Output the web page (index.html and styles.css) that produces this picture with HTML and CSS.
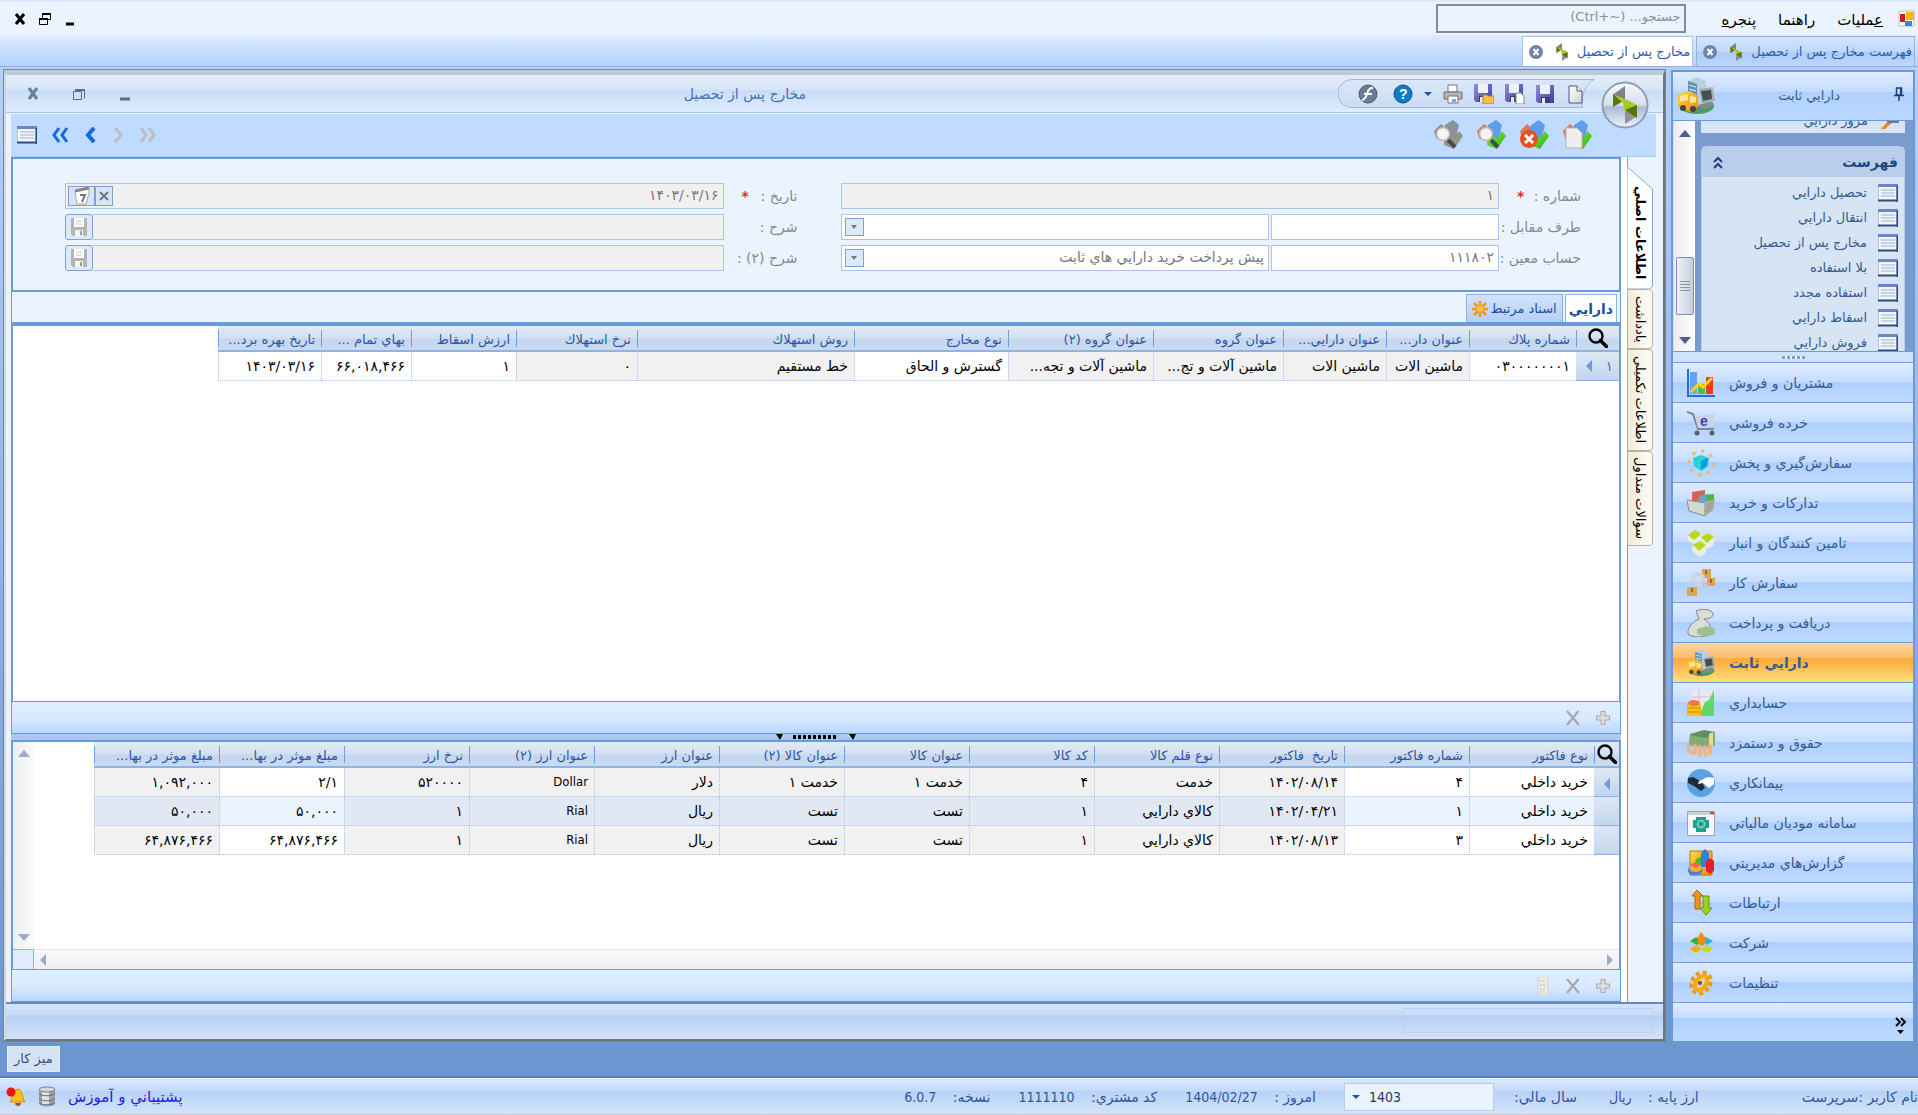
FILE: index.html
```
<!DOCTYPE html>
<html lang="fa" dir="rtl">

<head>
    <meta charset="utf-8">
    <title>مخارج پس از تحصيل</title>
    <link rel="stylesheet" href="styles.css">
</head>

<body>
    <!-- shared icons -->
    <svg class="defs" width="0" height="0">
        <linearGradient id="gDisk" x1="0" y1="0" x2="1" y2="1"><stop offset="0" stop-color="#8f90e0"/><stop offset="1" stop-color="#3a3a9e"/></linearGradient>
        <linearGradient id="gGreen" x1="0" y1="0" x2="1" y2="1"><stop offset="0" stop-color="#8be04a"/><stop offset="1" stop-color="#27b50d"/></linearGradient>
        <linearGradient id="gSilver" x1="0" y1="0" x2="0" y2="1"><stop offset="0" stop-color="#f8fafc"/><stop offset=".5" stop-color="#d5deea"/><stop offset=".55" stop-color="#a9bbd6"/><stop offset="1" stop-color="#eef4fb"/></linearGradient>
        <linearGradient id="gOrange" x1="0" y1="0" x2="1" y2="1"><stop offset="0" stop-color="#ffd83a"/><stop offset="1" stop-color="#ef8a12"/></linearGradient>
        <linearGradient id="gNew" x1="0" y1="0" x2="1" y2="1"><stop offset="0" stop-color="#ffffff"/><stop offset="1" stop-color="#d0d4dc"/></linearGradient>
        <linearGradient id="gPill" x1="0" y1="0" x2="0" y2="1"><stop offset="0" stop-color="#dce8f8"/><stop offset="1" stop-color="#c9dbf3"/></linearGradient>
        <symbol id="logo" viewBox="0 0 24 38">
            <path d="M12 0v14L0 8.500z" fill="#7d8288"/><path d="M12 38V24l12 6z" fill="#8e9298"/>
            <path d="M0 8v13l12-7z" fill="#56760f"/><path d="M0 8l12 5 12 6-12 7-2-9z" fill="#a9c92b"/><path d="M12 24l12-5v13z" fill="#55750f"/>
        </symbol>
        <symbol id="tabclose" viewBox="0 0 14 14">
            <circle cx="7" cy="7" r="7" fill="#6f84a6"/><path d="M4.500 4l5 6M9.500 4l-5 6" stroke="#fff" stroke-width="2"/>
        </symbol>
        <symbol id="list" viewBox="0 0 20 18">
            <path d="M0 .5h19v16H0z" fill="#f2f6fb" stroke="#7e93bd"/><path d="M0 0h20v3H0z" fill="#6a84c6"/><path d="M3 6h14M3 9h14M3 12h14" stroke="#9fb0cb"/><path d="M0 16.500h20M19.500 2v16" stroke="#2f4d7c" stroke-width="2"/>
        </symbol>
        <symbol id="mag" viewBox="0 0 20 20">
            <circle cx="8" cy="8" r="6.500" fill="none" stroke="#000" stroke-width="2.400"/><path d="M12.500 12.500l6 6" stroke="#000" stroke-width="3.600" stroke-linecap="round"/>
        </symbol>
        <symbol id="disk" viewBox="0 0 18 18">
            <path d="M0 0h18v18H2l-2-2z" fill="url(#gDisk)"/><path d="M4 0h10v9H4z" fill="#eef1fb"/><path d="M5 12h9v6H5z" fill="#3d3d70"/><path d="M6 13h3v5H6z" fill="#e8ebf6"/>
        </symbol>
        <symbol id="graydisk" viewBox="0 0 18 18">
            <path d="M1 0h16v18H3l-2-2z" fill="#b4b4b4"/><path d="M4 0h10v9H4z" fill="#fafafa"/><path d="M6 3h6M6 6h6" stroke="#ccc"/><path d="M5 12h8v6H5z" fill="#f4f4f4"/><path d="M10 13h2v4h-2z" fill="#999"/>
        </symbol>
        <symbol id="cubes" viewBox="0 0 30 30">
            <path d="M1 11l7-7 6 5-4 12-7-3z" fill="#d9776a"/><path d="M12 5l8-5 6 5-2 8 4 3-8 5-9-6z" fill="#5f9cea"/><path d="M12 14l9 4 5-7 4 5-9 13-10-4z" fill="url(#gGreen)"/>
        </symbol>
        <symbol id="graycubes" viewBox="0 0 30 30">
            <path d="M1 11l7-7 6 5-4 12-7-3z" fill="#8d8d8d"/><path d="M12 5l8-5 6 5-2 8 4 3-8 5-9-6z" fill="#8b9099"/><path d="M12 14l9 4 5-7 4 5-9 13-10-4z" fill="#8f9689"/>
        </symbol>
        <symbol id="lens" viewBox="0 0 30 30">
            <path d="M15 20l7 7" stroke="#4a4a4a" stroke-width="4"/><circle cx="10" cy="14" r="6.500" fill="#f4f4f4" stroke="#c2b5b0" stroke-width="1.500"/>
        </symbol>
        <symbol id="plus" viewBox="0 0 16 16">
            <path d="M6 1.500h4v4.500h4.500v4H10v4.500H6V10H1.500V6H6z" fill="#dcdcdc" stroke="#a9a9a9"/>
        </symbol>
        <symbol id="cross" viewBox="0 0 16 16">
            <path d="M2 1l12 14M13.500 1L2 15" stroke="#a8a8a8" stroke-width="2.200"/>
        </symbol>
        <symbol id="assets" viewBox="0 0 38 38">
            <ellipse cx="20" cy="29" rx="17" ry="8" fill="#4d9a63"/><path d="M11 4l9-4 9 4v22l-9 4-9-4z" fill="#b8d0e2"/><path d="M11 4l9 3v23l-9-4z" fill="#5f94b8"/><path d="M12 8l7 2M12 12l7 2M12 16l7 2" stroke="#dff2ff"/>
            <path d="M22 12l14-2 2 14-13 3z" fill="#a7adb1"/><path d="M24 14l10-1 1 9-9 2z" fill="#454f55"/><path d="M21 28l13-3 3 3-12 5z" fill="#808a8d"/>
            <path d="M1 17l12-3 8 5v11l-8 5-12-5z" fill="url(#gOrange)"/><path d="M3 19l8-2v6l-8 2zM13 19l6 1v5l-6 1z" fill="#fbe5a0"/><circle cx="6" cy="31" r="3" fill="#444"/><circle cx="16" cy="32" r="3" fill="#444"/>
        </symbol>
    </svg>

    <header class="menubar">
        <svg class="app-icon" viewBox="0 0 17 17"><path d="M1 1h15v15H1z" fill="#fff" stroke="#b8c0cc"/><path d="M2 4h5v8H2z" fill="#c81e1e"/><path d="M8 2h8v8H8z" fill="#f6b90e"/><path d="M7 11h7v5H7z" fill="#3e7fe0"/></svg>
        <nav class="menus">
            <a href="#"><u>ع</u>مليات</a>
            <a href="#"><u>ر</u>اهنما</a>
            <a href="#">پنجر<u>ه</u></a>
        </nav>
        <input class="search" type="text" placeholder="جستجو... (~+Ctrl)" aria-label="جستجو">
        <div class="app-controls">
            <button aria-label="کوچک"><svg width="12" height="14"><path d="M2 12h8" stroke="#000" stroke-width="3"/></svg></button>
            <button aria-label="بازگرداندن"><svg width="14" height="14"><path d="M4.500 1.500h8v6h-8zM1.500 6.500h8v6h-8z" fill="#eaf3ff" stroke="#000"/><path d="M4 2h9M1 7h9" stroke="#000" stroke-width="2"/></svg></button>
            <button aria-label="بستن"><svg width="12" height="14"><path d="M2 2l8 10M10 2L2 12" stroke="#000" stroke-width="3"/></svg></button>
        </div>
    </header>

    <nav class="doc-tabs">
        <a href="#" class="doc-tab"><span>فهرست مخارج پس از تحصيل</span>
            <svg class="tab-logo"><use href="#logo"/></svg><svg class="tab-close"><use href="#tabclose"/></svg></a>
        <a href="#" class="doc-tab current"><span>مخارج پس از تحصيل</span>
            <svg class="tab-logo"><use href="#logo"/></svg><svg class="tab-close"><use href="#tabclose"/></svg></a>
    </nav>

    <div class="workspace">
        <aside class="sidebar">
            <div class="side-head">
                <svg class="pin" viewBox="0 0 10 14"><path d="M2.500 1h5v7h-5zM0 8.500h10M5 8v6" fill="none" stroke="#1f3f7a" stroke-width="1.500"/><path d="M7 1v7" stroke="#1f3f7a" stroke-width="2"/></svg>
                <h2>دارايي ثابت</h2>
                <svg class="side-icon"><use href="#assets"/></svg>
            </div>
            <div class="side-scroll">
                <div class="side-groups">
                    <div class="group-cut">
                        <a href="#"><svg viewBox="0 0 20 18"><path d="M2 17L12 6l3 3-9 8z" fill="#e9862c"/><path d="M8 9h12" stroke="#7a7a7a" stroke-width="4"/></svg>مرور دارايي</a>
                    </div>
                    <section class="group">
                        <h3>فهرست<svg viewBox="0 0 10 13"><path d="M1 6l4-4 4 4M1 12l4-4 4 4" fill="none" stroke="#1e3f7d" stroke-width="2"/></svg></h3>
                        <ul>
                            <li><a href="#"><svg><use href="#list"/></svg>تحصيل دارايي</a></li>
                            <li><a href="#"><svg><use href="#list"/></svg>انتقال دارايي</a></li>
                            <li><a href="#"><svg><use href="#list"/></svg>مخارج پس از تحصيل</a></li>
                            <li><a href="#"><svg><use href="#list"/></svg>بلا استفاده</a></li>
                            <li><a href="#"><svg><use href="#list"/></svg>استفاده مجدد</a></li>
                            <li><a href="#"><svg><use href="#list"/></svg>اسقاط دارايي</a></li>
                            <li><a href="#"><svg><use href="#list"/></svg>فروش دارايي</a></li>
                        </ul>
                    </section>
                </div>
                <div class="scrollbar">
                    <i class="arrow up dark"></i>
                    <span class="thumb"></span>
                    <i class="arrow down dark"></i>
                </div>
            </div>
            <div class="side-grip"><i></i></div>
            <nav class="modules">
                <a href="#"><svg viewBox="0 0 28 28"><path d="M3 3h7v22H3z" fill="#5fa6f5"/><path d="M11 15h7v10h-7z" fill="#4cc43a"/><path d="M19 8h7v17h-7z" fill="#ef3b16"/><path d="M4 23l8-8 4 3 9-9" fill="none" stroke="#ffd21c" stroke-width="3"/><path d="M1 0v27h27" fill="none" stroke="#2a6cd0" stroke-width="2"/></svg><span>مشتريان و فروش</span></a>
                <a href="#"><svg viewBox="0 0 28 28"><path d="M0 3l6 2 5 15h16" fill="none" stroke="#7d8794" stroke-width="2"/><path d="M8 7l19-2v12l-16 2z" fill="#c9d3e6"/><text x="13" y="17" class="e-mark">e</text><circle cx="10" cy="24" r="2.500" fill="#5a5f68"/><circle cx="25" cy="24" r="2.500" fill="#5a5f68"/></svg><span>خرده فروشي</span></a>
                <a href="#"><svg viewBox="0 0 28 28"><circle cx="14" cy="14" r="12" fill="none" stroke="#f0b860" stroke-width="3" stroke-dasharray="3 6.400"/><path d="M6 9l8-3 8 3-1 8-7 5-7-5z" fill="#22d3dc"/><path d="M14 12l7-3-1 8-6 4z" fill="#1599d6"/></svg><span>سفارش‌گيري و پخش</span></a>
                <a href="#"><svg viewBox="0 0 28 28"><path d="M5 3l13-2v11H5z" fill="#d8624e"/><path d="M13 6l14-1v7H13z" fill="#4cb648"/><path d="M11 9l7-5 2 9h-9z" fill="#6d9fd0"/><path d="M0 11l18 3v13L2 22z" fill="#d5d7cf" stroke="#8a8d86"/><path d="M18 14l10-5-2 12-8 6z" fill="#a4a79f"/></svg><span>تداركات و خريد</span></a>
                <a href="#"><svg viewBox="0 0 28 28"><path d="M0 6l8-5 8 5-1 7-7 3-7-4zM13 8l8-5 7 5-1 8-7 4-6-4zM5 17l7-5 8 5-1 7-7 4-6-5z" fill="#e6ece6"/><path d="M1 6l7-5 6 4-7 6zM14 8l7-4 6 4-7 6zM6 16l7-4 6 4-7 6z" fill="#b9d818"/></svg><span>تامين كنندگان و انبار</span></a>
                <a href="#"><svg viewBox="0 0 28 28"><path d="M15 0h9v9h-9zM20 9h8v8h-8zM0 18h10v9H0z" fill="#dda551"/><path d="M18 1h2v4h-2zM23 10h2v4h-2zM4 19h2v4H4z" fill="#9a6b28"/><circle cx="11" cy="10" r="5" fill="none" stroke="#d0d4d8" stroke-width="4"/><circle cx="18" cy="16" r="2" fill="none" stroke="#c1c5ca" stroke-width="2"/></svg><span>سفارش كار</span></a>
                <a href="#"><svg viewBox="0 0 28 28"><path d="M9 2c6-3 16-2 17 3 1 4-7 5-9 5 5 3 8 9 7 14-5 5-19 5-23 1C0 19 6 12 12 10z" fill="#dcdcd8" stroke="#858581"/><path d="M10 20l10-3 8 3v5l-9 3-9-3z" fill="#9fc08f"/></svg><span>دريافت و پرداخت</span></a>
                <a href="#" class="current"><svg><use href="#assets"/></svg><span>دارايي ثابت</span></a>
                <a href="#"><svg viewBox="0 0 28 28"><path d="M5 1h22v26H5z" fill="#ece6f0"/><path d="M12 1v22M5 8h21" stroke="#cdbfd6"/><path d="M12 27l6-14 4-2 5-10v26z" fill="#62d667"/><path d="M0 15h14v12H0z" fill="#f6c018"/><path d="M0 19h14M0 23h14" stroke="#cf8d0b"/><ellipse cx="7" cy="14" rx="6" ry="3" fill="#ef7a35"/></svg><span>حسابداري</span></a>
                <a href="#"><svg viewBox="0 0 28 28"><path d="M3 5l14-4 11 2v13l-9 3L2 16z" fill="#5f9160"/><path d="M3 6l16 3 9-6v13l-9 3-17-3z" fill="#83ab72"/><path d="M22 5l4-2v14l-4 1z" fill="#e5dc8c"/><path d="M1 15c0 6 2 8 4 9M8 17v7M13 18v8M18 18v8M23 17v7" stroke="#ebb487" stroke-width="4" stroke-linecap="round" fill="none"/></svg><span>حقوق و دستمزد</span></a>
                <a href="#"><svg viewBox="0 0 28 28"><circle cx="14" cy="14" r="14" fill="#5ba3e0"/><path d="M1 9l5-1 9 5 3 6-4 3-7-5-6-3z" fill="#222b38"/><path d="M27 9l-6-1-9 4-1 3 5-1 6 5 5-4z" fill="#fff"/></svg><span>پيمانكاري</span></a>
                <a href="#"><svg viewBox="0 0 28 28"><path d="M.5 2.500h27v24H.5z" fill="#f4f8f8" stroke="#98a5ad"/><path d="M1 3h26v3H1z" fill="#c8d0d6"/><path d="M23 3h4v2h-4z" fill="#d23c3c"/><path d="M9 8h10v3h3v8h-3v4H9v-4H6v-8h3z" fill="#1fa08a"/><circle cx="14" cy="15" r="3.500" fill="none" stroke="#8cd6ca" stroke-width="1.500"/></svg><span>سامانه موديان مالياتي</span></a>
                <a href="#"><svg viewBox="0 0 28 28"><path d="M3 2h22v24H3z" fill="url(#gOrange)" stroke="#b97907"/><path d="M8 14a6 6 0 0 1 6-6v8z" fill="#4bb62c"/><path d="M14 4l4-4 4 4v14h-8z" fill="#2f7fe8"/><path d="M19 12l4-3 4 3v10l-4 3-4-3z" fill="#e22222"/><path d="M1 17a7 5 0 0 0 15 1l-1 5c-3 5-13 4-14-1z" fill="#3f83ea"/><path d="M3 16l5 3 6-3c-3-3-9-3-11 0z" fill="#f0655c"/></svg><span>گزارش‌هاي مديريتي</span></a>
                <a href="#"><svg viewBox="0 0 28 28"><path d="M10 1l6 6h-3v13H8V7H5z" fill="#f09419" stroke="#b36205"/><path d="M16 7h6v12h3l-6 7-6-7h3z" fill="#9dd21d" stroke="#5e9b0d"/></svg><span>ارتباطات</span></a>
                <a href="#"><svg viewBox="0 0 28 28"><path d="M9 8l6 4-5 4-7-4z" fill="#2fb62c"/><path d="M19 8l7 4-6 4-5-4z" fill="#23b3e6"/><path d="M9 16l6 4-6 4-6-4z" fill="#f6ad12"/><path d="M20 16l6 4-6 4-6-4z" fill="#c5da1b"/><path d="M11 8l3-5 4 5v7l-3 2-4-2z" fill="#f28a15"/></svg><span>شركت</span></a>
                <a href="#"><svg viewBox="0 0 28 28"><ellipse cx="14" cy="14" rx="9" ry="11" transform="rotate(35 14 14)" fill="none" stroke="#ee9914" stroke-width="4" stroke-dasharray="4 3"/><ellipse cx="14" cy="14" rx="5" ry="8" transform="rotate(35 14 14)" fill="#e9d3a0" stroke="#f5a716" stroke-width="4"/><circle cx="13" cy="14" r="2" fill="#555"/></svg><span>تنظيمات</span></a>
            </nav>
            <button class="more" aria-label="بيشتر"><svg width="12" height="18"><path d="M1 1l4 4-4 4M6 1l4 4-4 4" fill="none" stroke="#000" stroke-width="2"/><path d="M2 13h7l-3.500 4z"/></svg></button>
        </aside>

        <main class="window">
            <div class="win-title">
                <svg class="orb" viewBox="0 0 48 48"><circle cx="24" cy="24" r="22.500" fill="url(#gSilver)" stroke="#8f9db2" stroke-width="2"/><use href="#logo" x="12" y="5" width="24" height="38"/></svg>
                <div class="quick">
                    <svg class="pill" viewBox="0 0 268 29" preserveAspectRatio="none"><path d="M267.500.5H14a14 14 0 0 0 0 28H255c-2-12 3-24 12.500-28z" fill="url(#gPill)" stroke="#9db8e0"/></svg>
                    <button aria-label="جديد"><svg width="20" height="20"><path d="M4 2h8l5 5v12H4z" fill="url(#gNew)" stroke="#4a5a78"/><path d="M12 2v5h5" fill="#fff" stroke="#4a5a78"/></svg></button>
                    <button aria-label="ثبت"><svg width="18" height="18"><use href="#disk"/></svg></button>
                    <button aria-label="ثبت و جديد"><svg width="20" height="20"><use href="#disk" width="18" height="18"/><path d="M11 9h5l3 3v8h-8z" fill="#fff" stroke="#7a86a0"/></svg></button>
                    <button aria-label="ثبت و بستن"><svg width="20" height="20"><use href="#disk" width="18" height="18"/><path d="M9 11h4l1 1h6v8H9z" fill="#f4c04a" stroke="#b98420"/></svg></button>
                    <button aria-label="چاپ"><svg width="20" height="20"><path d="M5 1h9v7H5z" fill="#fff" stroke="#777"/><path d="M1 8h18v7H1z" fill="#b6b6ba" stroke="#6e6e74"/><path d="M5 12h10v7H5z" fill="#f5faff" stroke="#777"/><path d="M9 15h4v3H9z" fill="#5fb0e8"/></svg></button>
                    <i class="arrow down blue"></i>
                    <button aria-label="راهنما"><svg width="20" height="20"><circle cx="10" cy="10" r="9" fill="#0f7cc9" stroke="#0a4f94"/><text x="6" y="15" class="q-mark">?</text></svg></button>
                    <button class="formula" aria-label="فرمول"><svg width="20" height="20"><circle cx="10" cy="10" r="9" fill="#6c7c96" stroke="#4c5766"/><path d="M15 4c-4-1-5 3-6 6s-2 6-5 6M6 10h8" fill="none" stroke="#fff" stroke-width="2"/></svg></button>
                </div>
                <h1>مخارج پس از تحصيل</h1>
                <div class="win-controls">
                    <button aria-label="کوچک"><svg width="12" height="14"><path d="M1 12h10" stroke="#5b6d8c" stroke-width="3"/></svg></button>
                    <button aria-label="بازگرداندن"><svg width="12" height="14"><path d="M3.500 2.500h8v9M.5 4.500h8v8h-8z" fill="none" stroke="#5b6d8c"/><path d="M2 3h10" stroke="#5b6d8c" stroke-width="2"/></svg></button>
                    <button aria-label="بستن"><svg width="12" height="14"><path d="M2 1l8 11M10 1L2 12" stroke="#6b7fa5" stroke-width="3"/></svg></button>
                </div>
            </div>

            <div class="toolbar">
                <div class="actions">
                    <button aria-label="جديد"><svg width="30" height="30"><use href="#cubes"/><path d="M4 8h11l5 5v15H4z" fill="#f0eeec" stroke="#b9b4ae"/></svg></button>
                    <button aria-label="حذف"><svg width="30" height="30"><use href="#cubes"/><circle cx="10" cy="19" r="9" fill="#e8501e"/><path d="M6 15l8 8M14 15l-8 8" stroke="#fff" stroke-width="3"/></svg></button>
                    <button aria-label="مشاهده"><svg width="30" height="30"><use href="#cubes"/><use href="#lens"/></svg></button>
                    <button aria-label="جستجو"><svg width="30" height="30"><use href="#graycubes"/><use href="#lens"/></svg></button>
                </div>
                <div class="pager">
                    <button aria-label="اولين"><svg width="18" height="16"><path d="M2 1l5 7-5 7M10 1l5 7-5 7" fill="none" stroke="#bdbdbd" stroke-width="3"/></svg></button>
                    <button aria-label="قبلي"><svg width="14" height="16"><path d="M4 1l6 7-6 7" fill="none" stroke="#bdbdbd" stroke-width="3"/></svg></button>
                    <button aria-label="بعدي"><svg width="14" height="16"><path d="M11 1L5 8l6 7" fill="none" stroke="#1866e0" stroke-width="4"/></svg></button>
                    <button aria-label="آخرين"><svg width="18" height="16"><path d="M8 1L3 8l5 7M16 1l-5 7 5 7" fill="none" stroke="#1866e0" stroke-width="3"/></svg></button>
                    <button aria-label="فهرست"><svg width="20" height="18"><use href="#list"/></svg></button>
                </div>
            </div>

            <div class="win-body">
                <nav class="side-tabs">
                    <a href="#" class="first"><svg class="tab-edge" viewBox="0 0 26 132" preserveAspectRatio="none"><path d="M.5 0v10l25 22v97l-3 3H.5" fill="#fff" stroke="#8aa9c8"/></svg><b>اطلاعات اصلي</b></a>
                    <a href="#" class="note">يادداشت</a>
                    <a href="#" class="extra">اطلاعات تكميلي</a>
                    <a href="#" class="faq">سؤالات متداول</a>
                </nav>

                <div class="content">
                    <form class="form">
                        <label for="num">شماره : <em>*</em></label>
                        <input id="num" type="text" value="۱" disabled>
                        <label for="date">تاريخ : <em>*</em></label>
                        <div class="box">
                            <input id="date" type="text" value="۱۴۰۳/۰۳/۱۶" disabled>
                            <button type="button" class="tiny narrow" aria-label="پاك كردن"><svg width="10" height="12"><path d="M1 2l8 8M9 2L1 10" stroke="#777" stroke-width="2"/></svg></button>
                            <button type="button" class="tiny" aria-label="تقويم"><svg width="18" height="18"><path d="M2 4l14-3v5l-3 11H4z" fill="#fff" stroke="#aaa"/><path d="M2 4l14-3" stroke="#888" stroke-width="3"/><path d="M7 8h5l-3 7" fill="none" stroke="#777" stroke-width="2"/></svg></button>
                        </div>

                        <label for="party">طرف مقابل :</label>
                        <div class="pair">
                            <input id="party" type="text">
                            <div class="combo"><input type="text" aria-label="عنوان طرف مقابل"><button type="button" class="drop" aria-label="انتخاب"><i class="arrow down"></i></button></div>
                        </div>
                        <label for="desc">شرح :</label>
                        <div class="with-save"><input id="desc" type="text" disabled><button type="button" class="save" aria-label="ثبت شرح"><svg width="18" height="18"><use href="#graydisk"/></svg></button></div>

                        <label for="acc">حساب معين :</label>
                        <div class="pair">
                            <input id="acc" type="text" value="۱۱۱۸۰۲">
                            <div class="combo"><input type="text" value="پيش پرداخت خريد دارايي هاي ثابت" aria-label="عنوان حساب معين"><button type="button" class="drop" aria-label="انتخاب"><i class="arrow down"></i></button></div>
                        </div>
                        <label for="desc2">شرح (۲) :</label>
                        <div class="with-save"><input id="desc2" type="text" disabled><button type="button" class="save" aria-label="ثبت شرح ۲"><svg width="18" height="18"><use href="#graydisk"/></svg></button></div>
                    </form>

                    <nav class="sub-tabs">
                        <a href="#" class="current">دارايي</a>
                        <a href="#">اسناد مرتبط<svg viewBox="0 0 16 16"><path d="M8 0v16M0 8h16M2 2l12 12M14 2L2 14" stroke="#f0971a" stroke-width="2.500"/><circle cx="8" cy="8" r="3" fill="#ffc63b"/></svg></a>
                    </nav>

                    <div class="grid assets">
                        <table>
                            <colgroup>
                                <col class="w43"><col class="w107"><col class="w83"><col class="w103"><col class="w130"><col class="w145"><col class="w154"><col class="w217"><col class="w121"><col class="w105"><col class="w90"><col class="w103">
                            </colgroup>
                            <thead>
                                <tr>
                                    <th class="pick"><svg><use href="#mag"/></svg></th>
                                    <th>شماره پلاك</th><th>عنوان دار...</th><th>عنوان دارايي...</th><th>عنوان گروه</th><th>عنوان گروه (۲)</th><th>نوع مخارج</th><th>روش استهلاك</th><th>نرخ استهلاك</th><th>ارزش اسقاط</th><th>بهاي تمام ...</th><th>تاريخ بهره برد...</th>
                                </tr>
                            </thead>
                            <tbody>
                                <tr>
                                    <td class="pick">۱<i class="arrow left"></i></td>
                                    <td>۰۳۰۰۰۰۰۰۰۱</td><td class="ro">ماشين الات</td><td class="ro">ماشين الات</td><td class="ro">ماشين آلات و تج...</td><td class="ro">ماشين آلات و تجه...</td><td>گسترش و الحاق</td><td class="ro">خط مستقيم</td><td class="ro">۰</td><td>۱</td><td>۶۶,۰۱۸,۴۶۶</td><td>۱۴۰۳/۰۳/۱۶</td>
                                </tr>
                            </tbody>
                        </table>
                    </div>
                    <div class="grid-bar">
                        <button aria-label="افزودن"><svg><use href="#plus"/></svg></button>
                        <button aria-label="حذف"><svg><use href="#cross"/></svg></button>
                    </div>
                    <div class="splitter"><svg width="80" height="6"><path d="M0 0h7L4 6zM73 0h7l-3 6z"/><path d="M17 3h44" stroke="#000" stroke-width="4" stroke-dasharray="3 2"/></svg></div>

                    <div class="grid invoices">
                        <div class="grid-view">
                            <table>
                                <colgroup>
                                    <col class="w25"><col span="12" class="w125">
                                </colgroup>
                                <thead>
                                    <tr>
                                        <th class="pick"><svg><use href="#mag"/></svg></th>
                                        <th>نوع فاكتور</th><th>شماره فاكتور</th><th>تاريخ &nbsp;فاكتور</th><th>نوع قلم كالا</th><th>كد كالا</th><th>عنوان كالا</th><th>عنوان كالا (۲)</th><th>عنوان ارز</th><th>عنوان ارز (۲)</th><th>نرخ ارز</th><th>مبلغ موثر در بها...</th><th>مبلغ موثر در بها...</th>
                                    </tr>
                                </thead>
                                <tbody>
                                    <tr>
                                        <td class="pick"><i class="arrow left"></i></td>
                                        <td>خريد داخلي</td><td>۴</td><td class="ro">۱۴۰۲/۰۸/۱۴</td><td class="ro">خدمت</td><td class="ro">۴</td><td class="ro">خدمت ۱</td><td class="ro">خدمت ۱</td><td class="ro">دلار</td><td class="ro latin">Dollar</td><td class="ro">۵۲۰۰۰۰</td><td>۲/۱</td><td class="ro">۱,۰۹۲,۰۰۰</td>
                                    </tr>
                                    <tr>
                                        <td class="pick"></td>
                                        <td>خريد داخلي</td><td>۱</td><td class="ro">۱۴۰۲/۰۴/۲۱</td><td class="ro">كالاي دارايي</td><td class="ro">۱</td><td class="ro">تست</td><td class="ro">تست</td><td class="ro">ريال</td><td class="ro latin">Rial</td><td class="ro">۱</td><td>۵۰,۰۰۰</td><td class="ro">۵۰,۰۰۰</td>
                                    </tr>
                                    <tr>
                                        <td class="pick"></td>
                                        <td>خريد داخلي</td><td>۳</td><td class="ro">۱۴۰۲/۰۸/۱۳</td><td class="ro">كالاي دارايي</td><td class="ro">۱</td><td class="ro">تست</td><td class="ro">تست</td><td class="ro">ريال</td><td class="ro latin">Rial</td><td class="ro">۱</td><td>۶۴,۸۷۶,۴۶۶</td><td class="ro">۶۴,۸۷۶,۴۶۶</td>
                                    </tr>
                                </tbody>
                            </table>
                        </div>
                        <div class="vbar"><i class="arrow up"></i><i class="arrow down"></i></div>
                        <div class="hbar"><i class="arrow right"></i><i class="arrow left"></i></div>
                        <div class="corner"></div>
                    </div>
                    <div class="grid-bar last">
                        <button aria-label="افزودن"><svg><use href="#plus"/></svg></button>
                        <button aria-label="حذف"><svg><use href="#cross"/></svg></button>
                        <button aria-label="محاسبه"><svg viewBox="0 0 16 18"><path d="M3 0h10v18H3z" fill="#f0ece4" stroke="#d2cec6"/><path d="M5 4h6M5 8h6M5 12h6M5 15h6" stroke="#bdb9b0" stroke-dasharray="2 1"/></svg></button>
                    </div>
                </div>
            </div>
            <div class="win-status"><span></span></div>
        </main>
    </div>

    <div class="taskbar"><button>ميز كار</button></div>

    <footer class="statusbar">
        <span class="user">نام كاربر :سرپرست</span>
        <span class="cur">ارز پايه : <b>ريال</b></span>
        <label for="year">سال مالي:</label>
        <div class="year">
            <select id="year"><option>1403</option></select>
            <i class="arrow down blue"></i>
        </div>
        <span class="today">امروز : <b>1404/02/27</b></span>
        <span class="cust">كد مشتري: <b>1111110</b></span>
        <span>نسخه: <b>6.0.7</b></span>
        <a href="#" class="support">پشتيباني و آموزش</a>
        <svg class="db" viewBox="0 0 18 20"><path d="M1 3v14c0 4 16 4 16 0V3z" fill="#9aa2a8"/><path d="M4 4v14c3 1 5 1 7 0V4z" fill="#dfe4e8"/><path d="M1 7c2 3 14 3 16 0M1 12c2 3 14 3 16 0M1 16c2 3 14 3 16 0" fill="none" stroke="#666e74"/><ellipse cx="9" cy="3" rx="8" ry="2.500" fill="#d2d8dc" stroke="#777f85"/></svg>
        <svg class="bell" viewBox="0 0 20 20"><path d="M4 15c3-4 2-12 8-13 5 1 4 9 7 13z" fill="#f7bf1b" stroke="#d18d0a"/><path d="M9 16h6c0 4-6 4-6 0z" fill="#8a6220"/><circle cx="5" cy="5" r="4.500" fill="#f01212"/></svg>
    </footer>
</body>

</html>
```

FILE: styles.css
```
* {
    margin: 0;
    padding: 0;
    box-sizing: border-box;
}

body {
    display: flex;
    flex-direction: column;
    height: 100vh;
    overflow: hidden;
    background: #6c96d0;
    color: #000;
    font: 13px/20px "DejaVu Sans", sans-serif;
    white-space: nowrap;
}

a {
    color: inherit;
    text-decoration: none;
}

button {
    display: block;
    border: 0;
    background: none;
    font: inherit;
}

svg {
    display: block;
    flex: none;
}

.defs {
    position: absolute;
}

input {
    min-width: 0;
    font: inherit;
}

/* small triangles */
.arrow {
    display: block;
    width: 0;
    height: 0;
    border: 5px solid transparent;
}

.arrow.up {
    border-width: 0 6px 7px;
    border-bottom-color: #9aa9cc;
}

.arrow.down {
    border-width: 7px 6px 0;
    border-top-color: #9aa9cc;
}

.arrow.left {
    border-width: 6px 6px 6px 0;
    border-right-color: #6c9ad6;
}

.arrow.right {
    border-width: 6px 0 6px 6px;
    border-left-color: #9aa9cc;
}

.arrow.up.dark {
    border-bottom-color: #4d5f8e;
}

.arrow.down.dark {
    border-top-color: #4d5f8e;
}

.arrow.down.blue {
    border-width: 4px 4px 0;
    border-top-color: #24529c;
}

/* menu bar */
.menubar {
    display: flex;
    align-items: center;
    height: 35px;
    padding: 0 3px 0 14px;
    border-top: 2px solid #dce8f6;
    background: #ebf3ff;
    font-size: 15px;
}

.app-icon {
    width: 17px;
    height: 17px;
}

.menus {
    display: flex;
    gap: 22px;
    padding: 2px 15px 0 36px;
}

.search {
    width: 250px;
    height: 29px;
    padding: 0 3px 4px;
    border: 2px solid #858b93;
    background: #ebf3ff;
    font-size: 13px;
}

.search::placeholder {
    color: #8c9096;
    opacity: 1;
}

.app-controls {
    display: flex;
    gap: 12px;
    margin-right: auto;
}

/* open documents */
.doc-tabs {
    display: flex;
    gap: 3px;
    height: 31px;
    padding: 1px 3px 0 0;
    background: linear-gradient(#deecff, #b4d2ff);
    color: #2f5dab;
}

.doc-tab {
    display: flex;
    align-items: center;
    gap: 9px;
    padding: 0 2px 0 6px;
    border: 1px solid #92b4e4;
    border-bottom: 0;
    background: linear-gradient(#d5e5fb, #c0d8fa 50%, #aeccf8 52%, #bcd6fc);
}

.doc-tab.current {
    border-color: #a9c4ea;
    background: #fff;
}

.tab-logo {
    width: 12px;
    height: 18px;
    margin-left: 4px;
}

.tab-close {
    width: 14px;
    height: 14px;
}

.workspace {
    display: flex;
    flex: 1;
    gap: 6px;
    min-height: 0;
    padding: 3px 3px 0 4px;
    border-top: 1px solid #93b0de;
    background: linear-gradient(#b4d0fa, #6c96d0);
}

/* right navigation pane */
.sidebar {
    display: flex;
    flex-direction: column;
    width: 244px;
    border: 2px solid #6b98d6;
    border-bottom: 0;
    background: #bbd7ff;
    color: #365a94;
}

.side-head {
    display: flex;
    align-items: center;
    justify-content: space-between;
    height: 49px;
    padding: 0 9px 0 4px;
    border-bottom: 1px solid #6b98d6;
    background: linear-gradient(#e0edff, #c4dcff 40%, #b0d1ff 42%, #b9d7ff);
}

.side-head h2 {
    flex: 1;
    padding-right: 54px;
    font-size: 13px;
    font-weight: normal;
}

.side-head .pin {
    width: 10px;
    height: 14px;
    margin-bottom: 4px;
}

.side-icon {
    width: 38px;
    height: 38px;
}

.side-scroll {
    display: flex;
    height: 230px;
    overflow: hidden;
    background: #7a9ccd;
}

.side-groups {
    flex: 1;
    padding: 0 8px 0 6px;
}

.group-cut {
    display: flex;
    align-items: flex-end;
    height: 12px;
    padding: 0 6px 2px;
    overflow: hidden;
    background: #d6e4f3;
}

.group-cut a,
.group li a {
    display: flex;
    align-items: center;
    gap: 11px;
}

.group-cut svg,
.group li svg {
    width: 20px;
    height: 18px;
}

.group {
    margin-top: 13px;
    border: 1px solid #b8cdea;
    border-radius: 6px 6px 0 0;
    background: #d6e4f3;
}

.group h3 {
    display: flex;
    align-items: center;
    justify-content: space-between;
    height: 30px;
    padding: 0 6px 0 11px;
    background: #b9ceea;
    color: #23487f;
    font-size: 14px;
}

.group h3 svg {
    width: 10px;
    height: 13px;
}

.group ul {
    padding: 3px 6px;
    list-style: none;
}

.group li a {
    height: 25px;
}

.scrollbar {
    display: flex;
    flex-direction: column;
    align-items: center;
    width: 22px;
    padding: 9px 0 7px;
    border-left: 1px solid #d5d9e0;
    background: linear-gradient(to right, #ececee, #fff);
}

.thumb {
    width: 18px;
    height: 58px;
    margin: auto 0 22px;
    border: 1px solid #7f8db5;
    border-radius: 2px;
    background: repeating-linear-gradient(#8b94ad 0 1px, transparent 1px 3px) center / 10px 10px no-repeat, linear-gradient(to right, #eef1f8, #c6cddf);
}

.side-grip {
    display: flex;
    align-items: center;
    justify-content: center;
    height: 11px;
    border-top: 1px solid #6b98d6;
    background: #cfe2ff;
}

.side-grip i {
    width: 23px;
    height: 3px;
    background: repeating-linear-gradient(to right, #7f9fd2 0 3px, #eff6ff 3px 5px);
}

.modules {
    font-size: 14px;
}

.modules a {
    display: flex;
    flex-direction: row-reverse;
    align-items: center;
    justify-content: flex-end;
    gap: 14px;
    height: 40px;
    padding-left: 14px;
    border-top: 1px solid #6f9cdb;
    background: linear-gradient(#dfecff, #c6ddff 48%, #aed0ff 50%, #bfdaff);
}

.modules a {
    justify-content: flex-start;
}

.modules svg {
    width: 28px;
    height: 28px;
}

.modules .current {
    background: linear-gradient(#fdd5a4, #fdbd6a 38%, #fda93c 40%, #ffdf78);
    font-weight: bold;
}

.e-mark {
    fill: #443ca0;
    font: bold 14px "Liberation Sans", sans-serif;
    direction: ltr;
}

.more {
    flex: 1;
    padding: 8px 6px 0 0;
    border-top: 1px solid #6f9cdb;
    background: linear-gradient(#dfecff, #c6ddff 38%, #aed0ff 40%, #bfdaff);
}

/* document window */
.window {
    display: flex;
    flex: 1;
    flex-direction: column;
    min-width: 0;
    border: 2px solid #d5d9dd;
    border-top: 5px solid #bccbd9;
    border-right: 2px solid #70747b;
    border-bottom: 2px solid #70747b;
    outline: 1px solid #71869f;
    background: #ebf3ff;
}

.win-title {
    display: flex;
    align-items: center;
    position: relative;
    height: 38px;
    padding: 0 68px 0 21px;
    border-bottom: 1px solid #a9c7ee;
    background: linear-gradient(#e4edf9, #d8e6f9 38%, #c9ddf6 42%, #deebff);
}

.orb {
    position: absolute;
    top: 6px;
    right: 14px;
    width: 48px;
    height: 48px;
}

.quick {
    display: flex;
    align-items: center;
    gap: 11px;
    position: relative;
    height: 29px;
    padding: 0 10px 0 20px;
}

.quick > * {
    position: relative;
}

.quick .pill {
    position: absolute;
    top: 0;
    left: 0;
    width: 100%;
    height: 29px;
}

.formula {
    margin-right: 4px;
}

.win-title h1 {
    flex: 1;
    padding-right: 532px;
    color: #4470b8;
    font-size: 14px;
    font-weight: normal;
    text-align: right;
}

.win-controls {
    display: flex;
    gap: 34px;
}

.toolbar {
    display: flex;
    align-items: center;
    justify-content: space-between;
    height: 43px;
    margin: 1px 7px 0 5px;
    padding: 0 64px 0 6px;
    border-bottom: 1px solid #a9c7ee;
    background: #bfdbff;
}

.actions {
    display: flex;
    gap: 13px;
}

.pager {
    display: flex;
    align-items: center;
    gap: 14px;
}

.win-body {
    display: flex;
    flex: 1;
    min-height: 0;
    padding: 0 1px 0 5px;
}

/* rotated tabs */
.side-tabs {
    width: 35px;
    padding-right: 9px;
    border-left: 1px solid #7c9dc4;
}

.side-tabs a {
    display: flex;
    align-items: center;
    justify-content: center;
    position: relative;
    width: 26px;
    border: 1px solid #b5b39d;
    border-radius: 0 4px 4px 0;
    background: linear-gradient(to right, #f1ecd9, #fdfcf6);
    writing-mode: vertical-rl;
}

.side-tabs .first {
    height: 132px;
    padding-top: 20px;
    border: 0;
    background: none;
}

.tab-edge {
    position: absolute;
    top: 0;
    left: 0;
    width: 26px;
    height: 132px;
}

.side-tabs b {
    position: relative;
}

.side-tabs .note {
    height: 60px;
}

.side-tabs .extra {
    height: 102px;
}

.side-tabs .faq {
    height: 95px;
}

.content {
    display: flex;
    flex: 1;
    flex-direction: column;
    min-width: 0;
    padding-right: 6px;
    background: #fff;
}

.form {
    display: grid;
    grid-template-columns: 82px 1fr 117px 1fr;
    grid-template-rows: repeat(3, 26px);
    row-gap: 5px;
    height: 134px;
    padding: 24px 38px 0 52px;
    border: 2px solid #6c9ad6;
    border-bottom-width: 1px;
    background: #ebf3ff;
    color: #85888e;
    font-size: 14px;
}

.form label {
    padding-top: 3px;
}

.form label em {
    float: left;
    margin-left: 18px;
    color: #f02020;
    font-style: normal;
    font-weight: bold;
}

.form > :nth-child(4n + 3) {
    padding-right: 43px;
}

.form input {
    width: 100%;
    height: 26px;
    padding: 0 4px 2px;
    border: 1px solid #abc5ea;
    background: #fff;
    color: #777;
}

.form input:disabled {
    background: #f0f0f0;
}

.box,
.with-save,
.combo {
    display: flex;
    min-width: 0;
}

.box {
    padding-left: 2px;
    border: 1px solid #abc5ea;
    background: #f0f0f0;
}

.form .box input {
    height: 24px;
    border: 0;
}

.tiny {
    display: flex;
    align-items: center;
    justify-content: center;
    flex: none;
    width: 27px;
    height: 20px;
    margin-top: 2px;
    border: 1px solid #7f9fce;
    background: #d5e5f8;
}

.tiny.narrow {
    width: 18px;
}

.pair {
    display: grid;
    grid-template-columns: 228px 1fr;
    gap: 2px;
}

.combo {
    align-items: center;
    border: 1px solid #abc5ea;
    background: #fff;
}

.form .combo input {
    height: 24px;
    border: 0;
}

.drop {
    display: flex;
    align-items: center;
    justify-content: center;
    flex: none;
    width: 19px;
    height: 18px;
    margin-left: 3px;
    border: 1px solid #7f9fce;
    background: #dce9f9;
}

.drop .arrow.down {
    border-width: 4px 3px 0;
    border-top-color: #777;
}

.form .with-save input {
    border-left: 0;
}

.save {
    display: flex;
    align-items: center;
    justify-content: center;
    flex: none;
    width: 28px;
    border: 1px solid #7fa0d2;
    border-radius: 3px;
    background: #dce9f9;
}

/* tabs above the grid */
.sub-tabs {
    display: flex;
    align-items: flex-end;
    gap: 2px;
    height: 33px;
    padding: 0 3px;
    border: 1px solid #6c9ad6;
    border-width: 1px 1px 2px;
    background: #ebf3ff;
    color: #1f4f9f;
}

.sub-tabs a {
    display: flex;
    align-items: center;
    gap: 2px;
    height: 28px;
    padding: 0 5px;
    border: 1px solid #8fb0e2;
    border-bottom: 0;
    background: linear-gradient(#d3e3fa, #b4cff5);
}

.sub-tabs svg {
    width: 16px;
    height: 16px;
}

.sub-tabs .current {
    padding: 0 3px;
    background: #fff;
    font-size: 14px;
    font-weight: bold;
}

/* grids */
.grid {
    overflow: hidden;
    border: 2px solid #6c9ad6;
    border-bottom-width: 1px;
    background: #fff;
}

.grid.assets {
    flex: 1;
}

.grid table {
    width: 0;
    table-layout: fixed;
    border-collapse: separate;
    border-spacing: 0;
}

.w25 { width: 25px; }
.w43 { width: 43px; }
.w83 { width: 83px; }
.w90 { width: 90px; }
.w103 { width: 103px; }
.w105 { width: 105px; }
.w107 { width: 107px; }
.w121 { width: 121px; }
.w125 { width: 125px; }
.w130 { width: 130px; }
.w145 { width: 145px; }
.w154 { width: 154px; }
.w217 { width: 217px; }

th {
    height: 26px;
    padding: 4px 6px 0 2px;
    overflow: hidden;
    border-bottom: 2px solid #8fb2e2;
    background: linear-gradient(#6f9cdb, #6f9cdb) left 4px / 1px 17px no-repeat, linear-gradient(#e2ebf6, #d3e0f2 50%, #c5d7ef 55%, #c9daf1);
    color: #2c56a2;
    font-size: 13px;
    font-weight: normal;
    line-height: 18px;
    text-align: right;
}

th.pick {
    padding: 0 2px;
}

th.pick svg {
    width: 20px;
    height: 20px;
    margin: 0 auto;
}

td {
    height: 29px;
    padding: 0 6px 0 0;
    overflow: hidden;
    border-bottom: 1px dotted #a9c3ea;
    border-left: 1px dotted #a9c3ea;
    background: #fff;
    font-size: 14px;
    text-align: right;
}

td.ro {
    background: #f1f1f1;
}

td.latin {
    font-family: "DejaVu Sans Condensed", sans-serif;
    font-size: 13px;
}

tbody tr:nth-child(even) td {
    background: #ebf3ff;
}

tbody tr:nth-child(even) td.ro {
    background: #e1e8f3;
}

tbody td.pick,
tbody tr:nth-child(even) td.pick {
    border-bottom: 1px solid #8fb2e2;
    border-left: 0;
    background: linear-gradient(#dde8f5, #c3d6ee);
    color: #4a78bd;
}

.pick .arrow {
    float: left;
    margin: 4px 0 0 10px;
}

.grid-bar {
    display: flex;
    align-items: center;
    gap: 14px;
    height: 32px;
    padding: 0 9px;
    border: 1px solid #6c9ad6;
    border-top: 0;
    background: linear-gradient(#e1eeff, #d8e9ff 55%, #b8d6ff);
}

.grid-bar svg {
    width: 16px;
    height: 18px;
}

.splitter {
    display: flex;
    justify-content: center;
    height: 6px;
    background: #a9c7f0;
}

.grid.invoices {
    display: grid;
    grid-template: 207px 20px / 1fr 21px;
    height: 230px;
}

.grid-view {
    min-width: 0;
    overflow: hidden;
}

.vbar {
    display: flex;
    flex-direction: column;
    align-items: center;
    justify-content: space-between;
    padding: 8px 0;
    background: linear-gradient(to right, #eceef0, #fbfbfb);
}

.hbar {
    display: flex;
    align-items: center;
    justify-content: space-between;
    padding: 0 6px;
    border-top: 1px solid #e2e4e8;
    background: linear-gradient(#f8f9fa, #eceeef);
}

.hbar .arrow.left {
    border-right-color: #9aa9cc;
}

.corner {
    border: 1px solid #8fb2e2;
    border-width: 1px 1px 0 0;
    background: #e1edff;
}

.win-status {
    height: 37px;
    padding: 4px 10px;
    border-top: 2px solid #6489bd;
    background: linear-gradient(#d3e3fa, #c7dbf8 30%, #b5d0f5 34%, #d5e3f5);
}

.win-status span {
    display: block;
    width: 250px;
    height: 25px;
    border: 1px solid #b9d0f2;
}

/* bottom bars */
.taskbar {
    height: 37px;
    padding: 5px 7px;
    border-bottom: 2px solid #547fbd;
}

.taskbar button {
    height: 26px;
    margin-right: auto;
    padding: 0 6px;
    border: 1px solid #e3eefa;
    background: #d3e3f5;
    color: #33507d;
}

.statusbar {
    display: flex;
    align-items: center;
    height: 37px;
    padding-left: 6px;
    border-top: 1px solid #f2f8ff;
    border-bottom: 1px solid #c3c9d0;
    background: linear-gradient(#d9e8fd, #c5dbfa 32%, #b7d2f7 36%, #d5e4f6);
    color: #31559c;
    font-size: 14px;
}

.statusbar b {
    margin-right: 12px;
    font-family: "DejaVu Sans Condensed", "DejaVu Sans", sans-serif;
    font-weight: normal;
}

.user {
    margin-left: 103px;
}

.cur {
    margin-left: 32px;
}

.year {
    display: flex;
    align-items: center;
    position: relative;
    width: 150px;
    height: 28px;
    margin: 0 20px 0 28px;
}

.year select {
    width: 100%;
    height: 28px;
    padding-left: 24px;
    border: 1px solid #b5cdf0;
    appearance: none;
    background: #e9f2fe;
    color: #1d3766;
    direction: ltr;
    font: 14px "DejaVu Sans Condensed", "DejaVu Sans", sans-serif;
    text-align: left;
}

.year .arrow {
    position: absolute;
    left: 8px;
}

.today,
.cust {
    margin-left: 28px;
}

.support {
    margin-right: auto;
    color: #2020e8;
    font-size: 15px;
}

.db {
    width: 18px;
    height: 21px;
    margin: 0 12px;
}

.bell {
    width: 20px;
    height: 20px;
}

.q-mark {
    fill: #fff;
    font: bold 14px "Liberation Sans", sans-serif;
    direction: ltr;
}
```
